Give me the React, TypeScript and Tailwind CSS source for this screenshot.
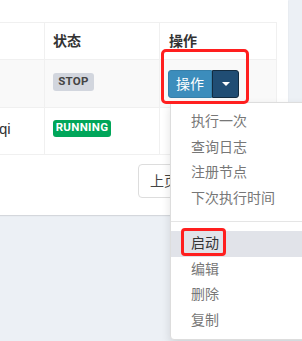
import React from 'react';

const font = { fontFamily: '"Liberation Sans", "Noto Sans CJK SC", sans-serif' };

const menuTop = ['执行一次', '查询日志', '注册节点', '下次执行时间'];
const menuBottom = ['启动', '编辑', '删除', '复制'];

const Badge = ({ text, className }: { text: string; className: string }) => (
  <span
    className={`inline-flex items-center justify-center rounded-[3px] font-['Roboto'] text-[11.5px] font-bold leading-none tracking-[0.3px] ${className}`}
  >
    {text}
  </span>
);

const ActionButton = () => (
  <div className="flex h-[28px] w-[71px] rounded-[3px]">
    <div className="flex w-[44px] items-center justify-center rounded-l-[3px] border border-[#367fa9] bg-[#3c8dbc] text-[14px] text-white">
      操作
    </div>
    <div className="flex w-[27px] items-center justify-center rounded-r-[3px] border border-[#122b40] bg-[#204d74]">
      <span className="h-0 w-0 border-x-[4px] border-t-[4px] border-x-transparent border-t-white" />
    </div>
  </div>
);

export default function App() {
  return (
    <div className="relative h-[341px] w-[302px] overflow-hidden bg-[#ecf0f5] text-[#333]" style={font}>
      {/* card */}
      <div className="h-[215px] w-[288px] bg-white pt-[22px] shadow-[0_1px_1px_rgba(0,0,0,0.1)]">
        <div className="w-[277px] text-[14px]">
          {/* header */}
          <div className="grid h-[38px] grid-cols-[45px_115px_117px] border-y border-[#f0f0f0]">
            <div className="border-r border-[#f0f0f0]" />
            <div className="flex items-center border-r border-[#f0f0f0] pl-[8px] font-bold">状态</div>
            <div className="flex items-center border-r border-[#f0f0f0] pl-[9px] font-bold">操作</div>
          </div>
          {/* row 1 */}
          <div className="grid h-[48px] grid-cols-[45px_115px_117px] border-b border-[#f0f0f0] bg-[#f9f9f9]">
            <div className="border-r border-[#f0f0f0]" />
            <div className="flex items-center border-r border-[#f0f0f0] pb-[4px] pl-[8px]">
              <Badge text="STOP" className="h-[18px] w-[41px] bg-[#d2d6de] text-[#444]" />
            </div>
            <div className="flex items-center border-r border-[#f0f0f0] pl-[8px] pt-[1px]">
              <ActionButton />
            </div>
          </div>
          {/* row 2 */}
          <div className="grid h-[47px] grid-cols-[45px_115px_117px] border-b border-[#f0f0f0]">
            <div className="flex items-center border-r border-[#f0f0f0] pb-[4px] pl-0 text-[15px]">
              <span className="-ml-px">qi</span>
            </div>
            <div className="flex items-center border-r border-[#f0f0f0] pb-[6px] pl-[8px]">
              <Badge text="RUNNING" className="h-[17px] w-[58px] bg-[#00a65a] text-white" />
            </div>
            <div className="border-r border-[#f0f0f0]" />
          </div>
          {/* pagination */}
          <div className="flex pl-[138px] pt-[9px]">
            <div className="flex h-[34px] items-center rounded-[4px] border border-[#ddd] pl-[11px] pr-[12px] text-[14px] text-[#444]">
              上页
            </div>
          </div>
        </div>
      </div>

      {/* dropdown menu */}
      <div className="absolute left-[170px] top-[102px] w-[160px] rounded-b-[4px] border border-[#ddd] bg-white py-[6px] shadow-[0_4px_10px_rgba(0,0,0,0.12)]">
        {menuTop.map((t) => (
          <div key={t} className="h-[25.5px] pl-[20px] text-[14px] leading-[25.5px] text-[#777]">
            {t}
          </div>
        ))}
        <div className="my-[9.5px] h-px bg-[#e5e5e5]" />
        {menuBottom.map((t, i) => (
          <div
            key={t}
            className={`h-[25.5px] pl-[20px] text-[14px] leading-[25.5px] ${i === 0 ? 'bg-[#e1e3e9] text-[#333]' : 'text-[#777]'}`}
          >
            {t}
          </div>
        ))}
      </div>

      {/* annotation boxes */}
      <div className="absolute left-[161px] top-[49px] h-[55px] w-[88px] rounded-[5px] border-[3px] border-[#ff1f1f]" />
      <div className="absolute left-[181px] top-[228px] h-[28px] w-[45px] rounded-[4px] border-[3px] border-[#ff1f1f]" />
    </div>
  );
}
